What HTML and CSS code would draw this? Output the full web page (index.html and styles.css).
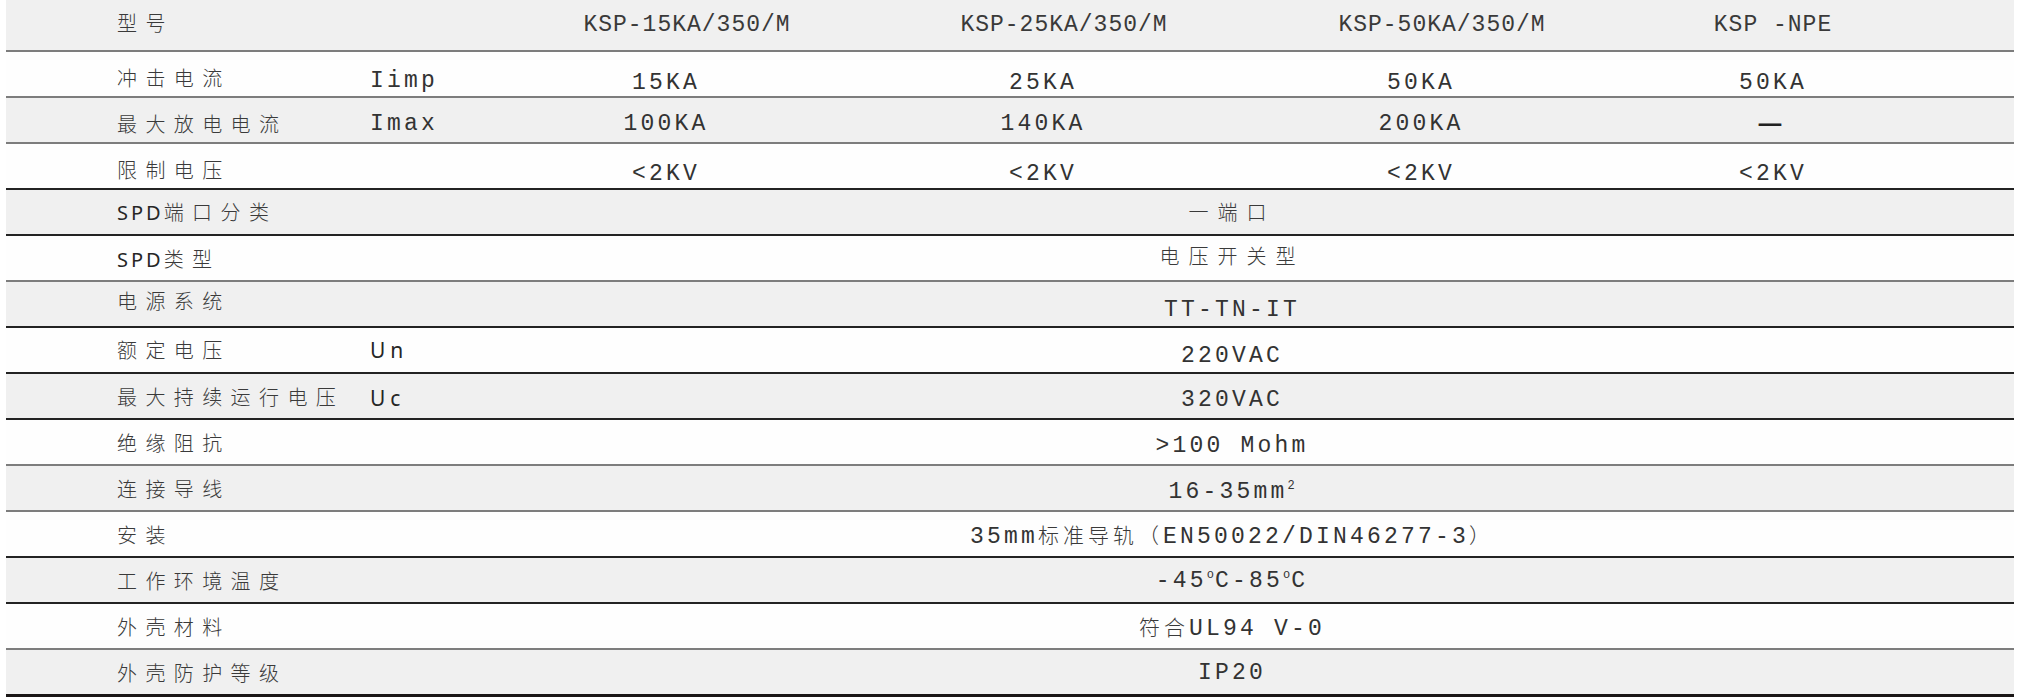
FILE: index.html
```html
<!DOCTYPE html>
<html lang="zh-CN">
<head>
<meta charset="utf-8">
<title>KSP 参数表</title>
<link rel="stylesheet" href="styles.css">
</head>
<body>
<div class="sheet">
  <div class="row head gray line-gray">
    <div class="label">型号</div>
    <div class="sym"></div>
    <div class="val model shift">KSP-15KA/350/M</div>
    <div class="val model shift">KSP-25KA/350/M</div>
    <div class="val model shift">KSP-50KA/350/M</div>
    <div class="val model">KSP -NPE</div>
  </div>
  <div class="row white line-gray low">
    <div class="label">冲击电流</div>
    <div class="sym p8">Iimp</div>
    <div class="val p12">15KA</div>
    <div class="val p12">25KA</div>
    <div class="val p12">50KA</div>
    <div class="val p12">50KA</div>
  </div>
  <div class="row gray line-gray mid">
    <div class="label b2">最大放电电流</div>
    <div class="sym">Imax</div>
    <div class="val">100KA</div>
    <div class="val">140KA</div>
    <div class="val">200KA</div>
    <div class="val dashcell"><span class="dash">—</span></div>
  </div>
  <div class="row white line-dark low">
    <div class="label">限制电压</div>
    <div class="sym"></div>
    <div class="val p10">&lt;2KV</div>
    <div class="val p10">&lt;2KV</div>
    <div class="val p10">&lt;2KV</div>
    <div class="val p10">&lt;2KV</div>
  </div>
  <div class="row gray line-dark">
    <div class="label b2"><span class="lat">SPD</span>端口分类</div>
    <div class="sym"></div>
    <div class="span cjk b2">一端口</div>
  </div>
  <div class="row white line-gray">
    <div class="label"><span class="lat">SPD</span>类型</div>
    <div class="sym"></div>
    <div class="span cjk b5">电压开关型</div>
  </div>
  <div class="row gray line-dark">
    <div class="label b8">电源系统</div>
    <div class="sym"></div>
    <div class="span p12">TT-TN-IT</div>
  </div>
  <div class="row white line-dark">
    <div class="label b2">额定电压</div>
    <div class="sym"><span class="lat2">Un</span></div>
    <div class="span p12">220VAC</div>
  </div>
  <div class="row gray line-dark">
    <div class="label">最大持续运行电压</div>
    <div class="sym p4"><span class="lat2">Uc</span></div>
    <div class="span p8">320VAC</div>
  </div>
  <div class="row white line-gray">
    <div class="label">绝缘阻抗</div>
    <div class="sym"></div>
    <div class="span p8">&gt;100 Mohm</div>
  </div>
  <div class="row gray line-gray">
    <div class="label">连接导线</div>
    <div class="sym"></div>
    <div class="span p8">16-35mm<sup>2</sup></div>
  </div>
  <div class="row white line-dark">
    <div class="label">安装</div>
    <div class="sym"></div>
    <div class="span">35mm<span class="zh">标准导轨（</span>EN50022/DIN46277-3<span class="zh">）</span></div>
  </div>
  <div class="row gray line-dark">
    <div class="label">工作环境温度</div>
    <div class="sym"></div>
    <div class="span p2">-45<sup>o</sup>C-85<sup>o</sup>C</div>
  </div>
  <div class="row white line-gray">
    <div class="label">外壳材料</div>
    <div class="sym"></div>
    <div class="span"><span class="zh">符合</span>UL94 V-0</div>
  </div>
  <div class="row gray last">
    <div class="label">外壳防护等级</div>
    <div class="sym"></div>
    <div class="span p2">IP20</div>
  </div>
</div>
</body>
</html>
```

FILE: styles.css
```css
html, body {
  margin: 0;
  padding: 0;
  background: #ffffff;
}

body {
  width: 2021px;
  height: 697px;
  overflow: hidden;
}

.sheet {
  margin-left: 6px;
  width: 2008px;
  color: #2a2a2a;
}

.row {
  display: grid;
  grid-template-columns: 364px 110px 372px 382px 374px 330px 76px;
  align-items: center;
  height: 46px;
  box-sizing: border-box;
  border-bottom: 2px solid #7b7b7b;
}

.gray { background: #f0f0f0; }
.white { background: #fefefe; }

.line-gray { border-bottom-color: #7d7d7d; }
.line-dark { border-bottom-color: #232323; }

.head {
  height: 52px;
  padding-bottom: 6px;
}

.last {
  height: 47px;
  border-bottom: 3px solid #1a1616;
}

.low { padding-top: 6px; }
.mid { padding-top: 3px; }

/* vertical nudges inside centred cells */
.p2 { padding-top: 2px; }
.p4 { padding-top: 4px; }
.p6 { padding-top: 6px; }
.p8 { padding-top: 8px; }
.p10 { padding-top: 10px; }
.p12 { padding-top: 12px; }
.p14 { padding-top: 14px; }
.b2 { padding-bottom: 2px; }
.b4 { padding-bottom: 4px; }
.b5 { padding-bottom: 5px; }
.b8 { padding-bottom: 8px; }

.label {
  padding-left: 111px;
  font-family: "Noto Sans CJK SC", sans-serif;
  font-size: 20px;
  font-weight: 300;
  letter-spacing: 8.4px;
  white-space: nowrap;
  color: #3a3a3a;
}

.lat {
  font-family: "Noto Sans", sans-serif;
  font-weight: 400;
  letter-spacing: 3px;
  color: #262626;
}

.lat2 {
  font-family: "Noto Sans", sans-serif;
  font-size: 21px;
  letter-spacing: 5px;
  color: #262626;
}

.sym {
  font-family: "Liberation Mono", "Noto Sans CJK SC", monospace;
  font-size: 23px;
  letter-spacing: 3.2px;
  white-space: nowrap;
  color: #333333;
}

.val {
  text-align: center;
  font-family: "Liberation Mono", "Noto Sans CJK SC", monospace;
  font-size: 23px;
  letter-spacing: 3.2px;
  white-space: nowrap;
  color: #333333;
}

.model {
  letter-spacing: 1px;
  color: #3a3a3a;
  padding-top: 6px;
}

.shift {
  padding-left: 42px;
}

.dashcell {
  padding-bottom: 6px;
}

.dash {
  font-family: "Noto Sans CJK SC", sans-serif;
  font-weight: 700;
  font-size: 28px;
  letter-spacing: 0;
  margin-right: 6px;
  color: #222222;
}

.span {
  grid-column: 3 / 8;
  text-align: center;
  padding-right: 30px;
  font-family: "Liberation Mono", "Noto Sans CJK SC", monospace;
  font-size: 23px;
  letter-spacing: 3.2px;
  white-space: nowrap;
  color: #333333;
}

.zh {
  font-family: "Noto Sans CJK SC", sans-serif;
  font-weight: 300;
  font-size: 21px;
  letter-spacing: 4px;
  color: #3a3a3a;
}

.cjk {
  font-family: "Noto Sans CJK SC", sans-serif;
  font-size: 20px;
  font-weight: 300;
  letter-spacing: 9px;
  color: #3a3a3a;
}

sup {
  font-size: 12px;
  letter-spacing: 1px;
  vertical-align: 9px;
  line-height: 0;
}
```
